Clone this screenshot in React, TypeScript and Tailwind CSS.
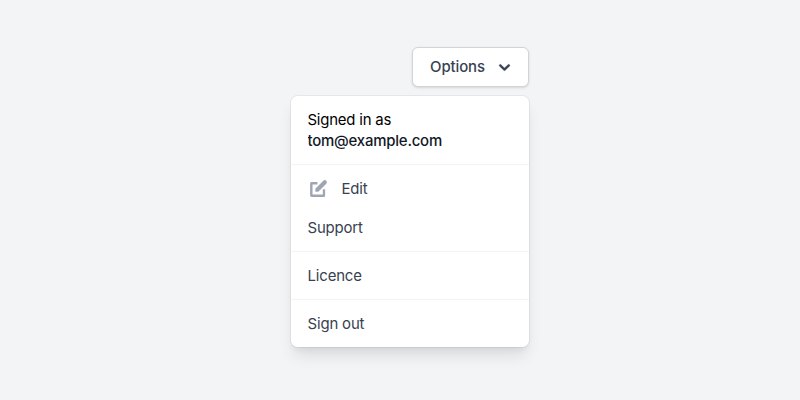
function ChevronDown() {
  return (
    <svg className="ml-[9px] size-[21px]" viewBox="0 0 20 20" fill="currentColor" stroke="currentColor" strokeWidth="0.3">
      <path
        fillRule="evenodd"
        clipRule="evenodd"
        d="M5.293 7.293a1 1 0 011.414 0L10 10.586l3.293-3.293a1 1 0 111.414 1.414l-4 4a1 1 0 01-1.414 0l-4-4a1 1 0 010-1.414z"
      />
    </svg>
  );
}

function PencilSquare() {
  return (
    <svg className="mr-[13px] size-[21px] text-[#9fa6b2]" viewBox="0 0 20 20" fill="currentColor">
      <path d="M17.414 2.586a2 2 0 00-2.828 0L7 10.172V13h2.828l7.586-7.586a2 2 0 000-2.828z" />
      <path
        fillRule="evenodd"
        clipRule="evenodd"
        d="M2 5.2a1.4 1.4 0 011.4-1.4H9v2.3H4.3v9.7h9.8v-5h2.2v6a1.3 1.3 0 01-1.3 1.3H3.4A1.4 1.4 0 012 16.7V5.2z"
      />
    </svg>
  );
}

const itemClass = "flex w-full items-center px-[17px] text-left text-[#374151]";

export default function App() {
  return (
    <div className="h-[400px] w-[800px] bg-[#f3f4f6] pl-[290.5px] pt-[47px] font-['Inter',sans-serif] text-[14.93px] leading-[21.33px] tracking-[-0.15px]">
      <div className="flex w-[238px] flex-col items-end">
        <button className="flex h-10 w-[116.5px] items-center rounded-md border border-[#d1d5db] bg-white pl-[17px] font-medium text-[#374151] shadow-sm">
          <span className="w-[55px] pt-0.5 tracking-[-0.1px]">Options</span>
          <ChevronDown />
        </button>
        <div className="mt-[9px] w-full divide-y divide-[#f3f4f6] rounded-[6.5px] bg-white shadow-[0_0_0_1px_rgba(0,0,0,0.05),0_10.7px_16px_-3.2px_rgba(0,0,0,0.1),0_4.3px_6.4px_-2.1px_rgba(0,0,0,0.05)]">
          <div className="h-[69px] px-[17px] pt-[14px] tracking-[-0.2px] text-black">
            <p>Signed in as</p>
            <p className="truncate font-medium text-[#111827]">tom@example.com</p>
          </div>
          <div className="h-[87px] py-1">
            <button className={`${itemClass} h-[39px]`}>
              <PencilSquare />
              <span className="pt-0.5">Edit</span>
            </button>
            <button className={`${itemClass} h-[38px] pt-[3px]`}>Support</button>
          </div>
          <div className="h-12 py-1">
            <button className={`${itemClass} h-[39px] pt-0.5`}>Licence</button>
          </div>
          <div className="h-[47px] py-1">
            <button className={`${itemClass} h-[39px] pt-0.5`}>Sign out</button>
          </div>
        </div>
      </div>
    </div>
  );
}
